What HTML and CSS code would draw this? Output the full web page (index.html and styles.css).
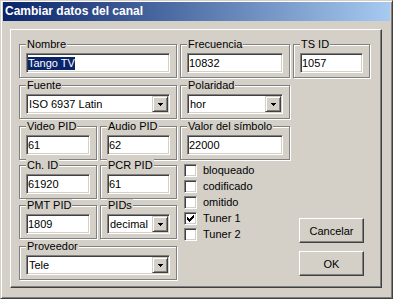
FILE: index.html
```html
<!DOCTYPE html>
<html lang="es">
<head>
    <meta charset="UTF-8">
    <meta name="viewport" content="width=device-width, initial-scale=1.0">
    <title>Cambiar datos del canal</title>
    <link rel="stylesheet" href="styles.css">
</head>
<body>
    <div class="window">
        <div class="titlebar">Cambiar datos del canal</div>

        <div class="panel">
            <div class="grid">
                <fieldset class="group area-nombre">
                    <legend>Nombre</legend>
                    <div class="field"><span class="selected">Tango TV</span></div>
                </fieldset>

                <fieldset class="group area-frec">
                    <legend>Frecuencia</legend>
                    <div class="field">10832</div>
                </fieldset>

                <fieldset class="group area-tsid">
                    <legend>TS ID</legend>
                    <div class="field">1057</div>
                </fieldset>

                <fieldset class="group area-fuente">
                    <legend>Fuente</legend>
                    <div class="combo">
                        <span class="combo-text">ISO 6937 Latin</span>
                        <span class="combo-btn"><svg width="5" height="3" viewBox="0 0 5 3"><path d="M0 0h5v1H0zM1 1h3v1H1zM2 2h1v1H2z" fill="#000"/></svg></span>
                    </div>
                </fieldset>

                <fieldset class="group area-pol">
                    <legend>Polaridad</legend>
                    <div class="combo">
                        <span class="combo-text">hor</span>
                        <span class="combo-btn"><svg width="5" height="3" viewBox="0 0 5 3"><path d="M0 0h5v1H0zM1 1h3v1H1zM2 2h1v1H2z" fill="#000"/></svg></span>
                    </div>
                </fieldset>

                <fieldset class="group area-video">
                    <legend>Video PID</legend>
                    <div class="field">61</div>
                </fieldset>

                <fieldset class="group area-audio">
                    <legend>Audio PID</legend>
                    <div class="field">62</div>
                </fieldset>

                <fieldset class="group area-valor">
                    <legend>Valor del símbolo</legend>
                    <div class="field">22000</div>
                </fieldset>

                <fieldset class="group area-chid">
                    <legend>Ch. ID</legend>
                    <div class="field">61920</div>
                </fieldset>

                <fieldset class="group area-pcr">
                    <legend>PCR PID</legend>
                    <div class="field">61</div>
                </fieldset>

                <fieldset class="group area-pmt">
                    <legend>PMT PID</legend>
                    <div class="field">1809</div>
                </fieldset>

                <fieldset class="group area-pids">
                    <legend>PIDs</legend>
                    <div class="combo">
                        <span class="combo-text">decimal</span>
                        <span class="combo-btn"><svg width="5" height="3" viewBox="0 0 5 3"><path d="M0 0h5v1H0zM1 1h3v1H1zM2 2h1v1H2z" fill="#000"/></svg></span>
                    </div>
                </fieldset>

                <fieldset class="group area-prov">
                    <legend>Proveedor</legend>
                    <div class="combo">
                        <span class="combo-text">Tele</span>
                        <span class="combo-btn"><svg width="5" height="3" viewBox="0 0 5 3"><path d="M0 0h5v1H0zM1 1h3v1H1zM2 2h1v1H2z" fill="#000"/></svg></span>
                    </div>
                </fieldset>

                <div class="checks">
                    <label class="check"><span class="box"></span>bloqueado</label>
                    <label class="check"><span class="box"></span>codificado</label>
                    <label class="check"><span class="box"></span>omitido</label>
                    <label class="check"><span class="box"><svg width="7" height="7" viewBox="0 0 7 7"><path d="M6 0h1v1H6zM5 1h2v1H5zM0 2h1v1H0zM4 2h3v1H4zM0 3h2v1H0zM3 3h3v1H3zM0 4h5v1H0zM1 5h3v1H1zM2 6h1v1H2z" fill="#000"/></svg></span>Tuner 1</label>
                    <label class="check"><span class="box"></span>Tuner 2</label>
                </div>

                <div class="buttons">
                    <button class="button">Cancelar</button>
                    <button class="button">OK</button>
                </div>
            </div>
        </div>
    </div>
</body>
</html>
```

FILE: styles.css
```css
* {
    box-sizing: border-box;
}

body {
    margin: 0;
    font-family: "Liberation Sans", Arial, sans-serif;
    font-size: 11px;
    color: #000;
    background-color: #d4d0c8;
}

.window {
    width: 393px;
    height: 299px;
    padding: 1px 2px 2px 2px;
    background-color: #d4d0c8;
    border: 1px solid;
    border-color: #d4d0c8 #404040 #404040 #d4d0c8;
    box-shadow: inset 1px 1px 0 #fff, inset -1px -1px 0 #808080;
}

.titlebar {
    height: 19px;
    padding-left: 2px;
    line-height: 19px;
    font-size: 12px;
    font-weight: bold;
    color: #fff;
    background: linear-gradient(to right, #0a246a, #a6caf0);
}

.panel {
    width: 372px;
    height: 259px;
    margin: 8px 0 0 7px;
    padding: 8px;
    border: 1px solid;
    border-color: #fff #404040 #404040 #fff;
    box-shadow: inset -1px -1px 0 #808080;
}

.grid {
    display: grid;
    grid-template-columns: 78px 77px 110px 77px;
    grid-template-rows: 41px 41px 39px 40px 41px 38px;
    column-gap: 3px;
    grid-template-areas:
        "nombre nombre frec tsid"
        "fuente fuente pol ."
        "video audio valor ."
        "chid pcr checks buttons"
        "pmt pids checks buttons"
        "prov prov checks buttons";
}

.area-nombre { grid-area: nombre; }
.area-frec { grid-area: frec; }
.area-tsid { grid-area: tsid; }
.area-fuente { grid-area: fuente; }
.area-pol { grid-area: pol; }
.area-video { grid-area: video; }
.area-audio { grid-area: audio; }
.area-valor { grid-area: valor; }
.area-chid { grid-area: chid; }
.area-pcr { grid-area: pcr; }
.area-pmt { grid-area: pmt; }
.area-pids { grid-area: pids; }
.area-prov { grid-area: prov; }

/* etched group box */
.group {
    align-self: start;
    min-width: 0;
    margin: 0;
    padding: 2px 6px 4px;
    border: 1px solid #808080;
    box-shadow: inset 1px 1px 0 #fff, 1px 1px 0 #fff;
}

.group legend {
    padding: 0 1px;
    line-height: 13px;
    background-color: #d4d0c8;
}

/* sunken edit box */
.field,
.combo {
    height: 20px;
    background-color: #fff;
    border: 1px solid;
    border-color: #808080 #fff #fff #808080;
    box-shadow: inset 1px 1px 0 #404040, inset -1px -1px 0 #d4d0c8;
}

.field {
    padding: 3px 1px 0;
    line-height: 13px;
    white-space: nowrap;
}

.selected {
    display: inline-block;
    color: #fff;
    background-color: #0a246a;
}

.combo {
    display: flex;
    padding: 1px;
}

.combo-text {
    flex: 1;
    padding-left: 1px;
    line-height: 16px;
    white-space: nowrap;
}

.combo-btn {
    display: flex;
    align-items: center;
    justify-content: center;
    width: 16px;
    height: 16px;
    padding-top: 1px;
    background-color: #d4d0c8;
    border: 1px solid;
    border-color: #d4d0c8 #404040 #404040 #d4d0c8;
    box-shadow: inset 1px 1px 0 #fff, inset -1px -1px 0 #808080;
}

.checks {
    grid-area: checks;
    display: flex;
    flex-direction: column;
    gap: 3px;
    padding: 5px 0 0 4px;
}

.check {
    display: flex;
    align-items: center;
    gap: 6px;
    height: 13px;
    line-height: 13px;
}

.box {
    display: flex;
    align-items: center;
    justify-content: center;
    width: 13px;
    height: 13px;
    background-color: #fff;
    border: 1px solid;
    border-color: #808080 #fff #fff #808080;
    box-shadow: inset 1px 1px 0 #404040, inset -1px -1px 0 #d4d0c8;
}

.buttons {
    grid-area: buttons;
    display: flex;
    flex-direction: column;
    justify-content: flex-end;
    align-items: center;
    gap: 8px;
    padding-bottom: 2px;
}

.button {
    width: 65px;
    height: 25px;
    padding: 0;
    font: inherit;
    color: #000;
    background-color: #d4d0c8;
    border: 1px solid;
    border-color: #fff #404040 #404040 #fff;
    box-shadow: inset -1px -1px 0 #808080;
}
```
